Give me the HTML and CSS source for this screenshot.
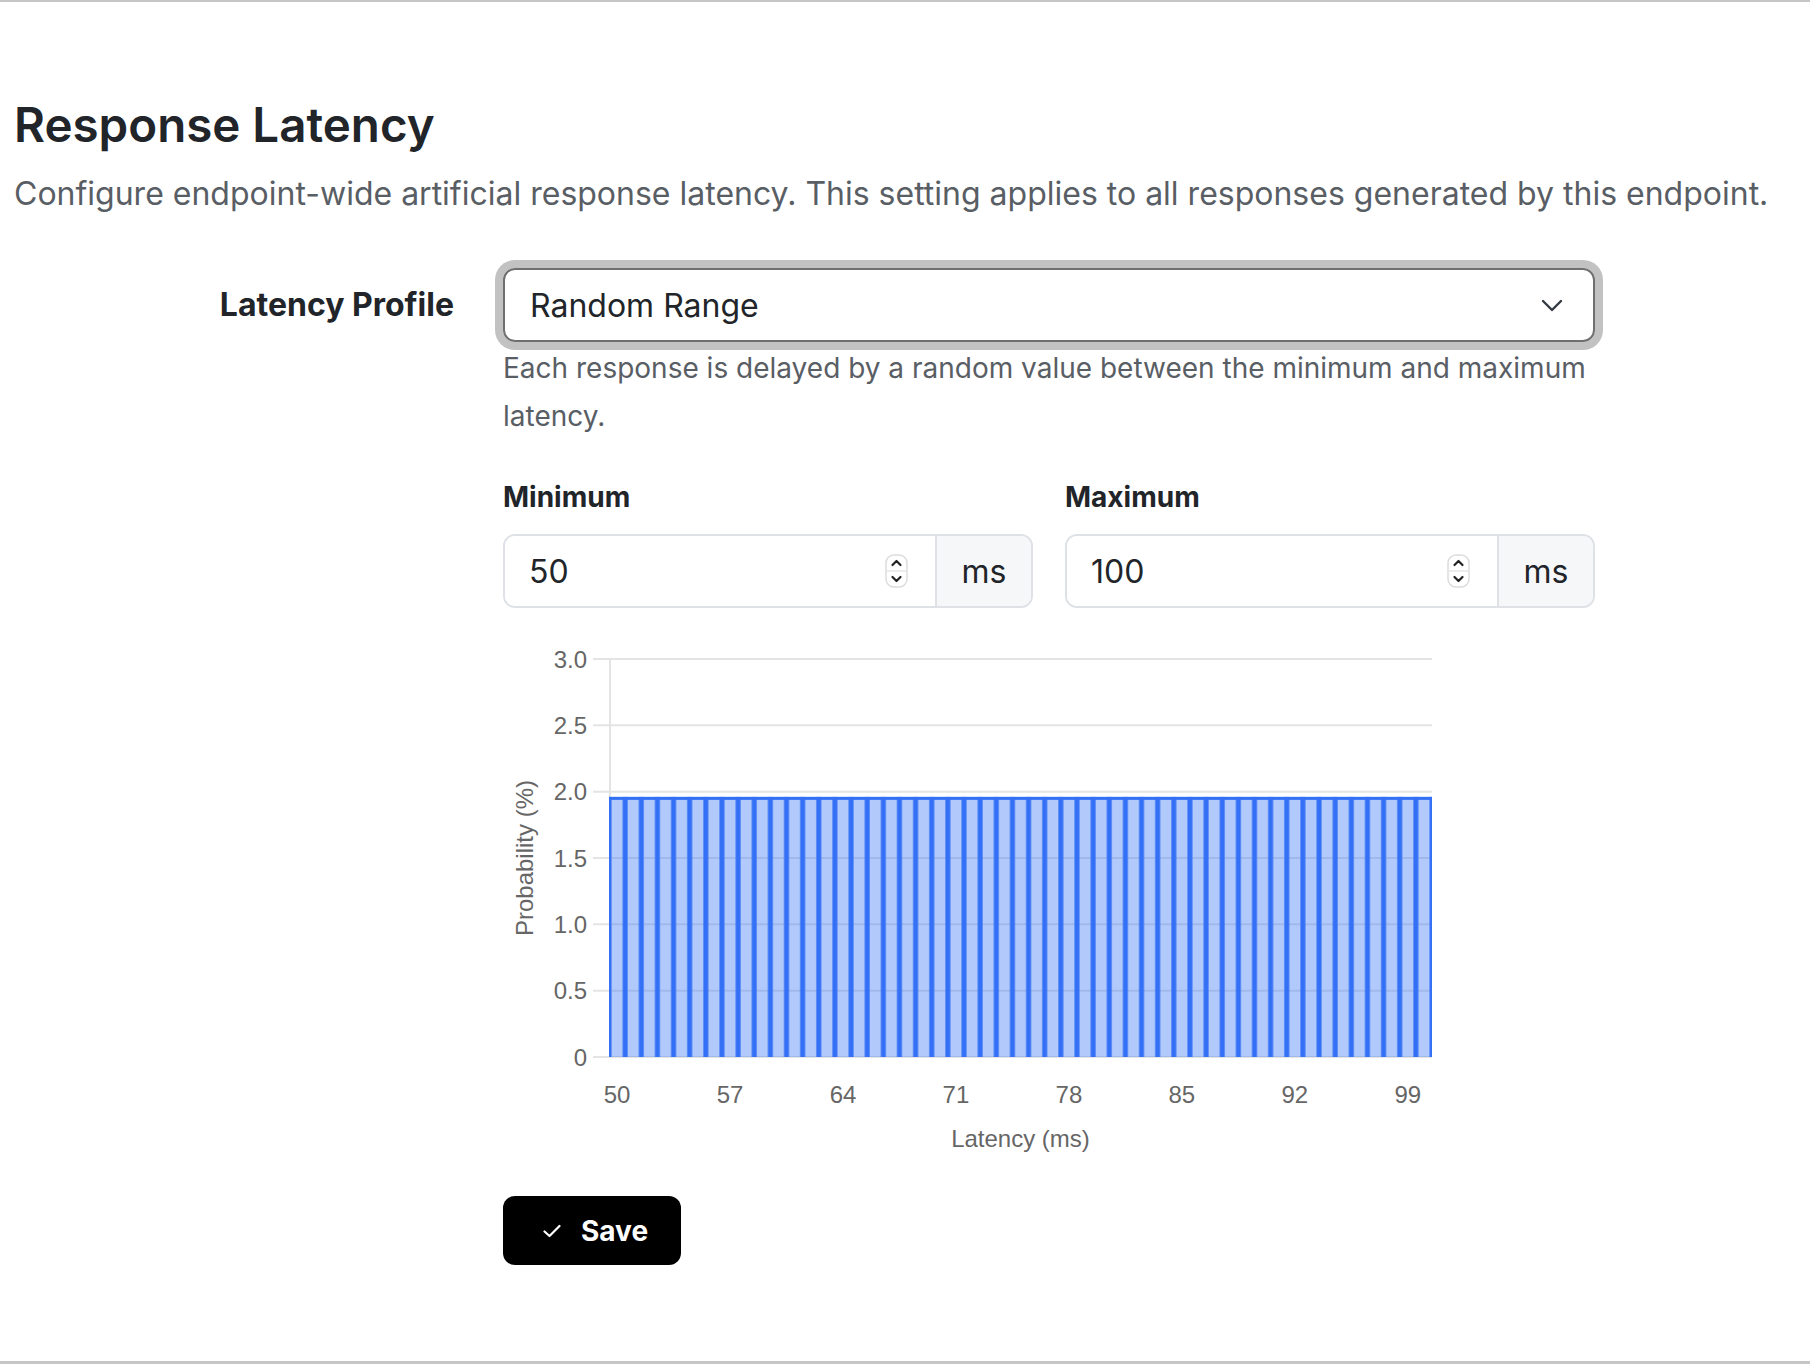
FILE: index.html
```html
<!DOCTYPE html>
<html lang="en">
<head>
<meta charset="utf-8">
<title>Response Latency</title>
<link rel="stylesheet" href="styles.css">
</head>
<body>
<section class="panel">
  <h2 class="title">Response Latency</h2>
  <p class="lead">Configure endpoint-wide artificial response latency. This setting applies to all responses generated by this endpoint.</p>
  <form class="form">
    <div class="row">
      <label class="row-label">Latency Profile</label>
      <div class="row-control">
        <div class="select">
          <span>Random Range</span>
          <svg class="chevron" width="22" height="13" viewBox="0 0 22 13"><path d="M2 2 L11 11 L20 2" fill="none" stroke="#343a40" stroke-width="2.4" stroke-linecap="round" stroke-linejoin="round"/></svg>
        </div>
        <p class="help">Each response is delayed by a random value between the minimum and maximum latency.</p>
        <div class="range">
          <div class="field">
            <div class="field-label">Minimum</div>
            <div class="input-group">
              <div class="input">
                <span>50</span>
                <svg class="spinner" width="23" height="34" viewBox="0 0 23 34"><rect x="1" y="1" width="21" height="32" rx="8" fill="#fff" stroke="#dcdcdc" stroke-width="1.5"/><line x1="2" y1="17" x2="21" y2="17" stroke="#e6e6e6" stroke-width="1.5"/><path d="M7.5 11 L11.5 7 L15.5 11" fill="none" stroke="#222" stroke-width="2.2" stroke-linecap="round" stroke-linejoin="round"/><path d="M7.5 23 L11.5 27 L15.5 23" fill="none" stroke="#222" stroke-width="2.2" stroke-linecap="round" stroke-linejoin="round"/></svg>
              </div>
              <div class="addon">ms</div>
            </div>
          </div>
          <div class="field">
            <div class="field-label">Maximum</div>
            <div class="input-group">
              <div class="input">
                <span>100</span>
                <svg class="spinner" width="23" height="34" viewBox="0 0 23 34"><rect x="1" y="1" width="21" height="32" rx="8" fill="#fff" stroke="#dcdcdc" stroke-width="1.5"/><line x1="2" y1="17" x2="21" y2="17" stroke="#e6e6e6" stroke-width="1.5"/><path d="M7.5 11 L11.5 7 L15.5 11" fill="none" stroke="#222" stroke-width="2.2" stroke-linecap="round" stroke-linejoin="round"/><path d="M7.5 23 L11.5 27 L15.5 23" fill="none" stroke="#222" stroke-width="2.2" stroke-linecap="round" stroke-linejoin="round"/></svg>
              </div>
              <div class="addon">ms</div>
            </div>
          </div>
        </div>
        <div class="chart">
          <svg width="940" height="520" viewBox="0 0 940 520">
            <defs>
              <pattern id="bars" patternUnits="userSpaceOnUse" x="106" y="0" width="16.1373" height="520">
                <rect x="0" y="0" width="16.1373" height="520" fill="rgba(51,112,245,0.38)"/>
                <rect x="0" y="0" width="2.5" height="520" fill="#3370f5"/>
                <rect x="13.6373" y="0" width="2.5" height="520" fill="#3370f5"/>
              </pattern>
            </defs>
            <g stroke="#e4e4e4" stroke-width="2">
              <line x1="90" y1="19" x2="929" y2="19"/>
              <line x1="90" y1="85.33" x2="929" y2="85.33"/>
              <line x1="90" y1="151.67" x2="929" y2="151.67"/>
              <line x1="90" y1="218" x2="929" y2="218"/>
              <line x1="90" y1="284.33" x2="929" y2="284.33"/>
              <line x1="90" y1="350.67" x2="929" y2="350.67"/>
              <line x1="90" y1="417" x2="929" y2="417"/>
              <line x1="107" y1="19" x2="107" y2="417"/>
            </g>
            <rect x="106" y="156.87" width="823" height="260.13" fill="url(#bars)"/>
            <rect x="106" y="156.87" width="823" height="3" fill="#3370f5"/>
            <g class="tick" text-anchor="end">
              <text x="84" y="27.6">3.0</text>
              <text x="84" y="93.9">2.5</text>
              <text x="84" y="160.3">2.0</text>
              <text x="84" y="226.6">1.5</text>
              <text x="84" y="292.9">1.0</text>
              <text x="84" y="359.3">0.5</text>
              <text x="84" y="425.6">0</text>
            </g>
            <g class="tick" text-anchor="middle">
              <text x="114.07" y="462.6">50</text>
              <text x="227.03" y="462.6">57</text>
              <text x="339.99" y="462.6">64</text>
              <text x="452.95" y="462.6">71</text>
              <text x="565.91" y="462.6">78</text>
              <text x="678.87" y="462.6">85</text>
              <text x="791.84" y="462.6">92</text>
              <text x="904.80" y="462.6">99</text>
            </g>
            <text class="tick" x="517.5" y="507" text-anchor="middle">Latency (ms)</text>
            <text class="tick" transform="translate(30 218) rotate(-90)" text-anchor="middle">Probability (%)</text>
          </svg>
        </div>
        <button type="button" class="save">
          <svg width="18" height="14" viewBox="0 0 18 14"><path d="M1.5 7.5 L6.5 12 L16.5 2" fill="none" stroke="#fff" stroke-width="2.2" stroke-linecap="round" stroke-linejoin="round"/></svg>
          <span>Save</span>
        </button>
      </div>
    </div>
  </form>
</section>
</body>
</html>
```

FILE: styles.css
```css
* { box-sizing: border-box; }

html, body {
  margin: 0;
  padding: 0;
  background: #fff;
}

body {
  font-family: Inter, "Noto Sans", "Liberation Sans", sans-serif;
  color: #212529;
}

.panel {
  border-top: 2px solid #c6c6c6;
  border-bottom: 3px solid #c6c6c6;
  padding: 94px 0 96px 14px;
  min-height: 1364px;
}

.title {
  margin: 0;
  font-size: 47.5px;
  line-height: 58px;
  font-weight: 600;
  color: #212529;
}

.lead {
  margin: 17px 0 0;
  font-size: 32px;
  line-height: 46px;
  color: #595e65;
}

.form {
  margin-top: 51px;
}

.row {
  display: grid;
  grid-template-columns: 489px 1092px;
  align-items: start;
}

.row-label {
  text-align: right;
  padding-right: 49px;
  font-size: 32px;
  line-height: 74px;
  font-weight: 700;
  color: #212529;
}

.row-control {
  display: flex;
  flex-direction: column;
  align-items: flex-start;
}

.select {
  width: 100%;
  height: 74px;
  border: 2px solid #6f6f6f;
  border-radius: 12px;
  box-shadow: 0 0 0 8px #c2c2c2;
  display: flex;
  align-items: center;
  justify-content: space-between;
  padding: 0 30px 0 25px;
  font-size: 32px;
  color: #212529;
}

.help {
  margin: 2px 0 0;
  font-size: 28px;
  line-height: 48px;
  color: #595e65;
}

.range {
  margin-top: 37px;
  width: 100%;
  display: grid;
  grid-template-columns: 1fr 1fr;
  column-gap: 32px;
}

.field-label {
  font-size: 28px;
  line-height: 40px;
  font-weight: 700;
  color: #212529;
  margin-bottom: 17px;
}

.input-group {
  display: flex;
  height: 74px;
  border: 2px solid #dee2e6;
  border-radius: 12px;
  overflow: hidden;
}

.input {
  flex: 1;
  display: flex;
  align-items: center;
  justify-content: space-between;
  padding: 0 27px 0 24px;
  font-size: 32px;
  color: #212529;
  background: #fff;
}

.addon {
  width: 96px;
  display: flex;
  align-items: center;
  justify-content: center;
  border-left: 2px solid #dee2e6;
  background: #f6f7f9;
  font-size: 32px;
  color: #212529;
}

.chart {
  margin-top: 32px;
  height: 520px;
}

.chart svg { display: block; }

.tick {
  font-family: "Liberation Sans", Arial, sans-serif;
  font-size: 24px;
  fill: #666;
}

.save {
  margin-top: 36px;
  height: 69px;
  width: 178px;
  border: 0;
  border-radius: 12px;
  background: #000;
  color: #fff;
  display: flex;
  align-items: center;
  gap: 20px;
  padding: 0 0 0 40px;
  font-family: Inter, "Noto Sans", "Liberation Sans", sans-serif;
  font-size: 28px;
  font-weight: 700;
}
```
